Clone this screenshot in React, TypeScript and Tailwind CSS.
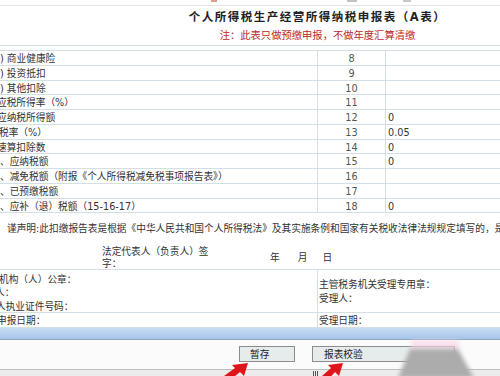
const font = { fontFamily: '"DejaVu Sans", "Noto Sans CJK SC", sans-serif' };

const rows = [
  { no: "8", label: ") 商业健康险", value: "", shift: "ml-0" },
  { no: "9", label: ") 投资抵扣", value: "", shift: "ml-0" },
  { no: "10", label: ") 其他扣除", value: "", shift: "ml-0" },
  { no: "11", label: "应税所得率（%）", value: "", shift: "-ml-[3px]" },
  { no: "12", label: "应纳税所得额", value: "0", shift: "-ml-[3px]" },
  { no: "13", label: "税率（%）", value: "0.05", shift: "-ml-[1px]" },
  { no: "14", label: "速算扣除数", value: "0", shift: "-ml-[3px]" },
  { no: "15", label: "、应纳税额", value: "0", shift: "ml-0" },
  { no: "16", label: "、减免税额（附报《个人所得税减免税事项报告表》）", value: "", shift: "ml-0" },
  { no: "17", label: "、已预缴税额", value: "", shift: "ml-0" },
  { no: "18", label: "、应补（退）税额（15-16-17）", value: "0", shift: "ml-0" },
];

function Row({ no, label, value, shift }: { no: string; label: string; value: string; shift: string }) {
  return (
    <div className="flex h-[14.75px] border-b border-[#d2dfe5] text-[9.7px] leading-[15px]">
      <div className="w-[318px] shrink-0 overflow-hidden whitespace-nowrap border-r border-[#d2dfe5] text-[#333]">
        <span className={`inline-block ${shift}`}>{label}</span>
      </div>
      <div className="w-[68px] shrink-0 border-r border-[#d2dfe5] text-center text-[#555]">{no}</div>
      <div className="flex-1 pl-[2px] text-[#333]">{value}</div>
    </div>
  );
}

export default function App() {
  return (
    <div className="relative h-[376px] w-[500px] overflow-hidden bg-white" style={font}>
      {/* cut-off toolbar strip */}
      <div className="relative h-[6px] border-b border-[#dfe4e7]">
        <span className="absolute left-[211px] top-0 h-[2px] w-[6px] bg-[#d9a08a]" />
        <span className="absolute left-[347px] top-0 h-[2px] w-[10px] bg-[#c4c4c4]" />
        <span className="absolute left-[403px] top-0 h-[2px] w-[8px] bg-[#c9c9c9]" />
      </div>

      {/* title */}
      <div className="flex h-[35px] flex-col items-center pl-[135px]">
        <div className="mt-[4px] text-[11.5px] font-bold leading-[14px] tracking-[1.5px] text-[#222]">
          个人所得税生产经营所得纳税申报表（A表）
        </div>
        <div className="mt-[5px] text-[10.3px] leading-[13px] text-[#c0282a]">
          注：此表只做预缴申报，不做年度汇算清缴
        </div>
      </div>

      {/* row scrolled under the header */}
      <div className="h-[5px] overflow-hidden border-b border-[#d2dfe5]">
        <div className="-mt-[11px] flex text-[9.7px] leading-[14px] text-[#555]">
          <div className="w-[318px] pl-[7px] text-[#444]">允许扣除的其他费用</div>
          <div className="w-[68px] text-center">7</div>
          <div className="pl-[2px]">7.000</div>
        </div>
      </div>
      <div className="h-[5px] border-b border-[#d2dfe5]" />

      {rows.map((r) => (
        <Row key={r.no} {...r} />
      ))}

      {/* declaration */}
      <div className="h-[57px] border-b border-[#d2dfe5] text-[9.7px] leading-[12px] text-[#333]">
        <div className="overflow-hidden whitespace-nowrap pl-[7px] pt-[10px]">
          谨声明:此扣缴报告表是根据《中华人民共和国个人所得税法》及其实施条例和国家有关税收法律法规规定填写的，是本人（单位）真实的
        </div>
        <div className="mt-[11px] flex items-center">
          <div className="ml-[102px] w-[110px]">法定代表人（负责人）签字：</div>
          <div className="ml-[58px] flex">
            <span>年</span>
            <span className="ml-[18px]">月</span>
            <span className="ml-[15px]">日</span>
          </div>
        </div>
      </div>

      <div className="flex h-[43px] border-b border-[#d2dfe5] text-[9.7px] leading-[13.5px] text-[#333]">
        <div className="w-[318px] shrink-0 overflow-hidden whitespace-nowrap border-r border-[#d2dfe5] pt-[2.5px]">
          <div className="-ml-[1px]">机构（人）公章：</div>
          <div className="-ml-[5px]">人：</div>
          <div className="-ml-[4px]">人执业证件号码：</div>
        </div>
        <div className="pl-[1px] pt-[8px] leading-[14px]">
          <div>主管税务机关受理专用章：</div>
          <div>受理人：</div>
        </div>
      </div>
      <div className="flex h-[15px] border-b border-[#d2dfe5] text-[9.7px] leading-[15px] text-[#333]">
        <div className="w-[318px] shrink-0 overflow-hidden whitespace-nowrap border-r border-[#d2dfe5]">
          <div className="-ml-[3px]">申报日期：</div>
        </div>
        <div className="pl-[1px]">受理日期：</div>
      </div>

      {/* toolbar */}
      <div className="h-[12px] border-b border-[#8ea5bd] bg-gradient-to-b from-[#c9ddf4] to-[#a6c4e8]" />
      <div className="flex h-[29px] bg-[#fbfbfb] pt-[6px] text-[9.7px] leading-[13px] text-[#222]">
        <button
          type="button"
          className="ml-[239px] h-[16px] w-[56px] border border-[#8c8c8c] bg-[#e6ecec] pl-[10px] text-left"
        >
          暂存
        </button>
        <button
          type="button"
          className="ml-[17px] h-[16px] w-[143px] border border-[#8c8c8c] bg-[#e6ecec] pl-[11px] text-left"
        >
          报表校验
        </button>
      </div>
      <div className="relative h-[8px] border-t border-[#bfbfbf] bg-[#ececec]">
        <div className="absolute left-[313px] top-[1px] flex gap-[1px]">
          <span className="h-[5px] w-px bg-[#555]" />
          <span className="h-[5px] w-px bg-[#555]" />
          <span className="h-[5px] w-px bg-[#555]" />
        </div>
      </div>

      {/* overlays: arrows and cursor smudge */}
      <svg className="pointer-events-none absolute left-0 top-0" width="500" height="376">
        <defs>
          <filter id="blur" x="-20%" y="-20%" width="140%" height="140%">
            <feGaussianBlur stdDeviation="2" />
          </filter>
        </defs>
        <polygon points="412,340 458,340 460,350 410,350" fill="#f7d6e6" filter="url(#blur)" opacity="0.7" />
        <polygon points="410,349 458,349 474,378 398,378" fill="#acacac" filter="url(#blur)" />
        <polygon points="248,363 244,376 240,372 229,381 224,376 235,368 232,365" fill="#e0151b" />
        <polygon points="343,363 339,376 335,372 327,381 322,376 331,368 328,365" fill="#e0151b" />
      </svg>
    </div>
  );
}
